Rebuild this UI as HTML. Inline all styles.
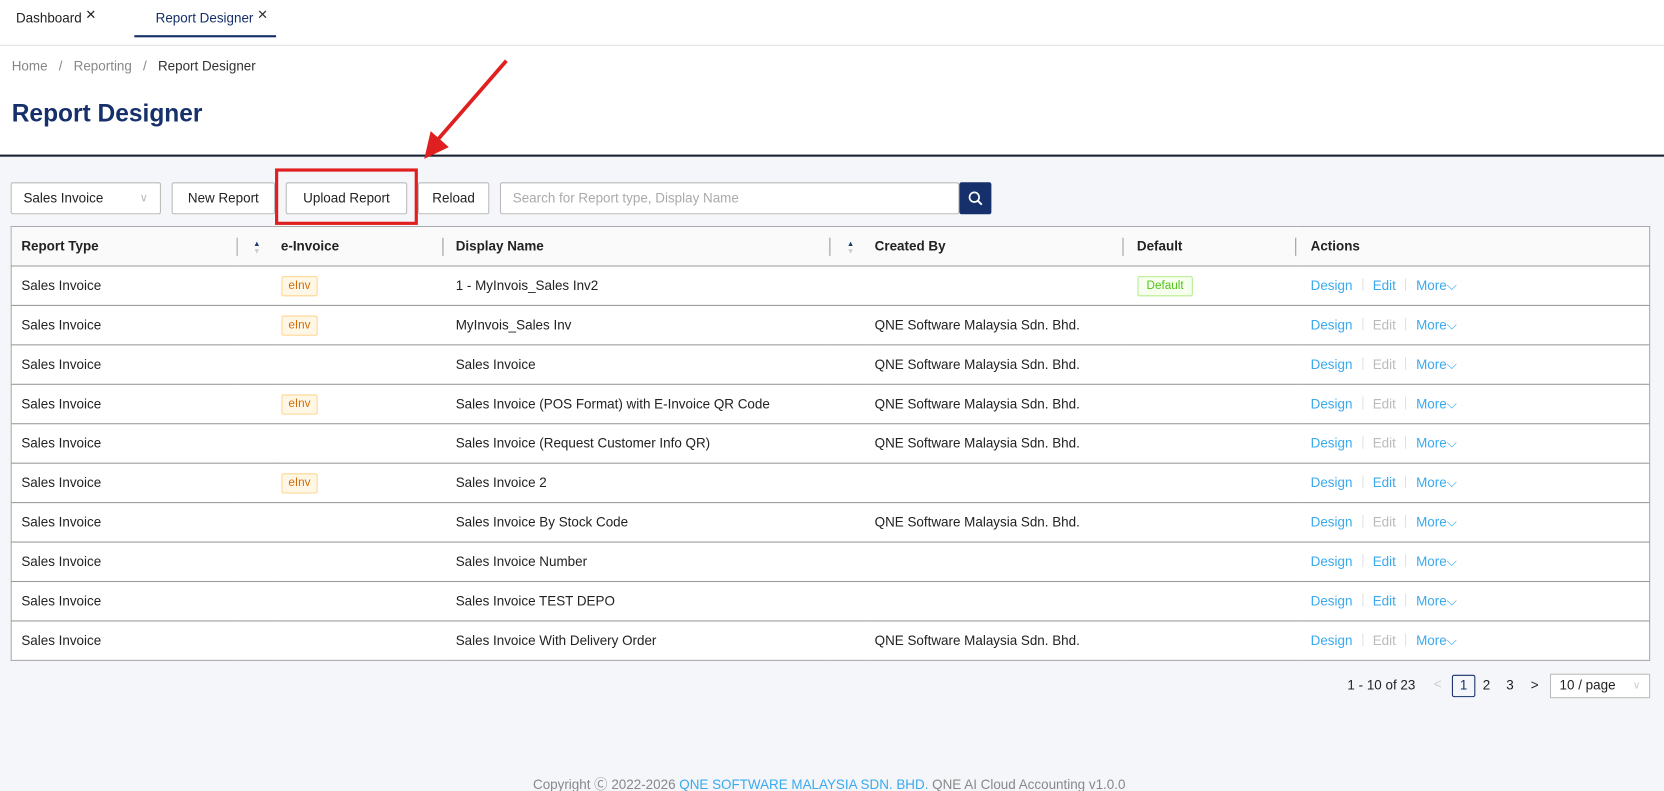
<!DOCTYPE html>
<html><head><meta charset="utf-8"><style>
*{box-sizing:border-box;margin:0;padding:0}
html,body{width:1664px;height:791px;overflow:hidden;background:#f5f6fa}
body{font-family:"Liberation Sans",sans-serif;font-size:12.6px;color:#222;position:relative}
#w{position:absolute;left:0;top:0;width:1561px;height:742px;transform:scale(1.066);transform-origin:0 0}
.a{position:absolute}
.top{left:0;top:0;width:1561px;height:147px;background:#fff;border-bottom:2px solid #1a2233}
.btn{position:absolute;top:171px;height:30px;border:1px solid #bbb;background:#fff;border-radius:2px;line-height:28px;text-align:center;font-size:12.6px}
table{position:absolute;left:10px;top:212px;width:1538px;border-collapse:collapse;background:#fff;border:1px solid #aaa;table-layout:fixed}
th{height:37px;background:#fafafa;text-align:left;font-weight:bold;font-size:12.6px;border-bottom:1px solid #999;position:relative;padding-left:9px}
td{height:37px;border-bottom:1px solid #999;padding-left:9px;font-size:12.6px;white-space:nowrap}
tr:last-child td{border-bottom:none}
.dv{position:absolute;right:0;top:10px;height:17px;width:1px;background:#999}
.tag{display:inline-block;border:1px solid #ffd591;background:#fff7e6;color:#d46b08;font-size:11px;padding:0 6px;height:19px;line-height:17px;border-radius:2px}
.def{display:inline-block;border:1px solid #b7eb8f;background:#f6ffed;color:#52c41a;font-size:11px;padding:0 8px;height:19px;line-height:17px;border-radius:2px}
.l{color:#3aa9ee}.g{color:#bbb}.sep{display:inline-block;width:1px;height:12px;background:#e2e2e2;margin:0 9px;vertical-align:-1px}
.sort{position:absolute;font-size:7px;line-height:7px;color:#1a3a6e}
.c{padding-left:8px}.d{padding-left:12px}.g2{padding-left:13px}.h{padding-left:14px}
</style></head><body><div id="w">
<div class="a top"></div>
<div class="a" style="left:0;top:42px;width:1561px;height:1px;background:#e0e0e0"></div>
<div class="a" style="left:15px;top:10px">Dashboard <span style="position:relative;top:-3px;font-size:12px">✕</span></div>
<div class="a" style="left:146px;top:10px;color:#15306b">Report Designer <span style="position:relative;top:-3px;font-size:12px;color:#333">✕</span></div>
<div class="a" style="left:126px;top:33px;width:133px;height:2px;background:#15306b"></div>
<div class="a" style="left:11px;top:55px;color:#888">Home &nbsp;&nbsp;/&nbsp;&nbsp; Reporting &nbsp;&nbsp;/&nbsp;&nbsp; <span style="color:#333">Report Designer</span></div>
<div class="a" style="left:11px;top:93px;font-size:23px;font-weight:bold;color:#15306b">Report Designer</div>

<div class="btn" style="left:10px;width:141px;text-align:left;padding-left:11px">Sales Invoice<span style="position:absolute;right:11px;color:#bbb;font-size:11px">∨</span></div>
<div class="btn" style="left:161px;width:97px">New Report</div>
<div class="btn" style="left:268px;width:114px">Upload Report</div>
<div class="btn" style="left:392px;width:67px">Reload</div>
<div class="btn" style="left:469px;width:431px;text-align:left;padding-left:11px;color:#aaa">Search for Report type, Display Name</div>
<div class="a" style="left:900px;top:171px;width:30px;height:30px;background:#15306b;border-radius:2px"><svg width="30" height="30"><circle cx="14" cy="14" r="4.5" fill="none" stroke="#fff" stroke-width="1.6"/><path d="M17.3 17.3L21 21" stroke="#fff" stroke-width="1.8"/></svg></div>
<div class="a" style="left:258px;top:158px;width:134px;height:53px;border:3px solid #e02020"></div>
<svg class="a" style="left:380px;top:50px" width="110" height="110"><path d="M95 7L28 84" stroke="#e02020" stroke-width="3.5"/><path d="M18 99L24 73L41 88Z" fill="#e02020"/></svg>

<table>
<colgroup><col style="width:212px"><col style="width:33px"><col style="width:160px"><col style="width:363px"><col style="width:33px"><col style="width:242px"><col style="width:162px"><col></colgroup>
<tr><th>Report Type<span class="dv"></span></th><th style="padding:0"><span class="sort" style="left:15px;top:13px">▲<br><span style="color:#ccc">▼</span></span></th><th class="c">e-Invoice<span class="dv"></span></th><th class="d">Display Name<span class="dv"></span></th><th style="padding:0"><span class="sort" style="left:16px;top:13px">▲<br><span style="color:#ccc">▼</span></span></th><th>Created By<span class="dv"></span></th><th class="g2">Default<span class="dv"></span></th><th class="h">Actions</th></tr>
<tr><td colspan="2">Sales Invoice</td><td class="c"><span class="tag">eInv</span></td><td colspan="2" class="d">1 - MyInvois_Sales Inv2</td><td></td><td class="g2"><span class="def">Default</span></td><td class="h"><span class="l">Design</span><span class="sep"></span><span class="l">Edit</span><span class="sep"></span><span class="l">More⌵</span></td></tr>
<tr><td colspan="2">Sales Invoice</td><td class="c"><span class="tag">eInv</span></td><td colspan="2" class="d">MyInvois_Sales Inv</td><td>QNE Software Malaysia Sdn. Bhd.</td><td></td><td class="h"><span class="l">Design</span><span class="sep"></span><span class="g">Edit</span><span class="sep"></span><span class="l">More⌵</span></td></tr>
<tr><td colspan="2">Sales Invoice</td><td></td><td colspan="2" class="d">Sales Invoice</td><td>QNE Software Malaysia Sdn. Bhd.</td><td></td><td class="h"><span class="l">Design</span><span class="sep"></span><span class="g">Edit</span><span class="sep"></span><span class="l">More⌵</span></td></tr>
<tr><td colspan="2">Sales Invoice</td><td class="c"><span class="tag">eInv</span></td><td colspan="2" class="d">Sales Invoice (POS Format) with E-Invoice QR Code</td><td>QNE Software Malaysia Sdn. Bhd.</td><td></td><td class="h"><span class="l">Design</span><span class="sep"></span><span class="g">Edit</span><span class="sep"></span><span class="l">More⌵</span></td></tr>
<tr><td colspan="2">Sales Invoice</td><td></td><td colspan="2" class="d">Sales Invoice (Request Customer Info QR)</td><td>QNE Software Malaysia Sdn. Bhd.</td><td></td><td class="h"><span class="l">Design</span><span class="sep"></span><span class="g">Edit</span><span class="sep"></span><span class="l">More⌵</span></td></tr>
<tr><td colspan="2">Sales Invoice</td><td class="c"><span class="tag">eInv</span></td><td colspan="2" class="d">Sales Invoice 2</td><td></td><td></td><td class="h"><span class="l">Design</span><span class="sep"></span><span class="l">Edit</span><span class="sep"></span><span class="l">More⌵</span></td></tr>
<tr><td colspan="2">Sales Invoice</td><td></td><td colspan="2" class="d">Sales Invoice By Stock Code</td><td>QNE Software Malaysia Sdn. Bhd.</td><td></td><td class="h"><span class="l">Design</span><span class="sep"></span><span class="g">Edit</span><span class="sep"></span><span class="l">More⌵</span></td></tr>
<tr><td colspan="2">Sales Invoice</td><td></td><td colspan="2" class="d">Sales Invoice Number</td><td></td><td></td><td class="h"><span class="l">Design</span><span class="sep"></span><span class="l">Edit</span><span class="sep"></span><span class="l">More⌵</span></td></tr>
<tr><td colspan="2">Sales Invoice</td><td></td><td colspan="2" class="d">Sales Invoice TEST DEPO</td><td></td><td></td><td class="h"><span class="l">Design</span><span class="sep"></span><span class="l">Edit</span><span class="sep"></span><span class="l">More⌵</span></td></tr>
<tr><td colspan="2">Sales Invoice</td><td></td><td colspan="2" class="d">Sales Invoice With Delivery Order</td><td>QNE Software Malaysia Sdn. Bhd.</td><td></td><td class="h"><span class="l">Design</span><span class="sep"></span><span class="g">Edit</span><span class="sep"></span><span class="l">More⌵</span></td></tr>
</table>

<div class="a" style="left:1264px;top:636px">1 - 10 of 23</div>
<div class="a" style="left:1345px;top:635px;color:#ccc">&lt;</div>
<div class="a" style="left:1362px;top:633px;width:22px;height:21px;border:1px solid #15306b;border-radius:2px;text-align:center;line-height:19px;color:#15306b">1</div>
<div class="a" style="left:1391px;top:636px">2</div>
<div class="a" style="left:1413px;top:636px">3</div>
<div class="a" style="left:1436px;top:636px">&gt;</div>
<div class="a" style="left:1454px;top:632px;width:94px;height:23px;border:1px solid #bbb;background:#fff;padding-left:8px;line-height:21px">10 / page<span style="position:absolute;right:8px;color:#ccc;font-size:10px">∨</span></div>

<div class="a" style="left:500px;top:725px;color:#888;white-space:nowrap">Copyright Ⓒ 2022-2026 <span class="l">QNE SOFTWARE MALAYSIA SDN. BHD.</span> QNE AI Cloud Accounting v1.0.0</div>
</div></body></html>
